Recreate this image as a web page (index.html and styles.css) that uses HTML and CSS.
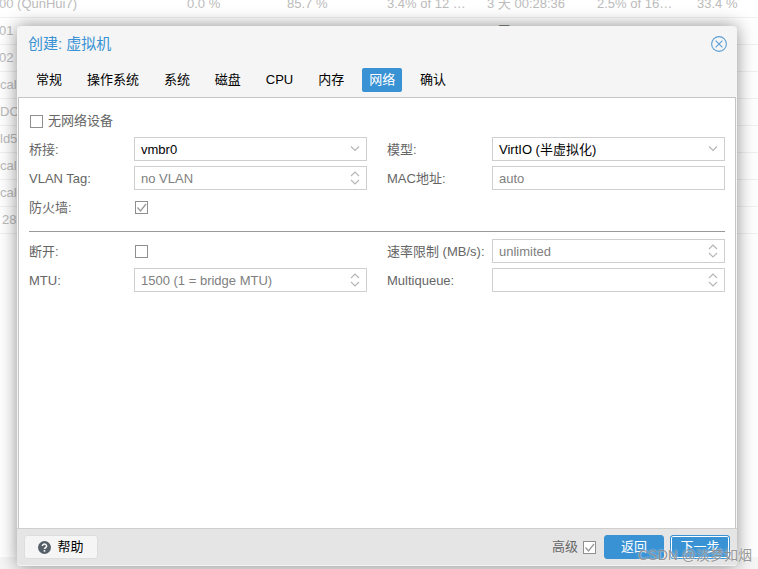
FILE: index.html
```html
<!DOCTYPE html>
<html lang="zh">
<head>
<meta charset="utf-8">
<title>创建: 虚拟机</title>
<link rel="stylesheet" href="styles.css">
</head>
<body>
<svg class="defs" width="0" height="0" aria-hidden="true">
  <symbol id="chev" viewBox="0 0 12 8"><path d="M2 1.5 6 5.5l4-4" fill="none" stroke="#b5b5b5" stroke-width="1.1"/></symbol>
  <symbol id="spin" viewBox="0 0 12 16"><path d="M2 6 6 2l4 4M2 10l4 4 4-4" fill="none" stroke="#b5b5b5" stroke-width="1.1"/></symbol>
  <symbol id="tick" viewBox="0 0 13 13"><path d="M2.5 6.5 5.5 10 11 3" fill="none" stroke="#999" stroke-width="1.3"/></symbol>
</svg>

<div class="grid">
  <div class="row"><span class="clip">00 (QunHui7)</span><span>0.0 %</span><span>85.7 %</span><span>3.4% of 12 …</span><span>3 天 00:28:36</span><span>2.5% of 16…</span><span>33.4 %</span></div>
  <div class="row"><span class="clip">01 (</span><span></span><span></span><span></span><span class="peek">3 天</span><span></span><span></span></div>
  <div class="row"><span class="clip">02 (</span></div>
  <div class="row"><span>calr</span></div>
  <div class="row"><span>DC</span></div>
  <div class="row"><span>ld5</span></div>
  <div class="row"><span>cal</span></div>
  <div class="row"><span>cal-</span></div>
  <div class="row"><span class="inset">28</span></div>
</div>
<div class="strip"></div>

<section class="window">
  <header class="win-head">
    <h1>创建: 虚拟机</h1>
    <svg class="close" width="16" height="16" viewBox="0 0 16 16"><circle cx="8" cy="8" r="7.4" fill="none" stroke="#5c9fd6" stroke-width="1.1"/><path d="M4.6 4.6l6.8 6.8M11.4 4.6l-6.8 6.8" stroke="#5c9fd6" stroke-width="1.1"/></svg>
  </header>
  <nav class="tabs">
    <span class="tab">常规</span>
    <span class="tab">操作系统</span>
    <span class="tab">系统</span>
    <span class="tab">磁盘</span>
    <span class="tab">CPU</span>
    <span class="tab">内存</span>
    <span class="tab active">网络</span>
    <span class="tab">确认</span>
  </nav>
  <main class="panel">
    <label class="nonet"><span class="check"></span><span>无网络设备</span></label>
    <div class="form">
      <div class="field"><span class="lbl">桥接:</span><div class="input"><span class="val">vmbr0</span><svg class="chev"><use href="#chev"/></svg></div></div>
      <div class="field"><span class="lbl">模型:</span><div class="input"><span class="val">VirtIO (半虚拟化)</span><svg class="chev"><use href="#chev"/></svg></div></div>
      <div class="field"><span class="lbl">VLAN Tag:</span><div class="input"><span class="val ph">no VLAN</span><svg class="spin"><use href="#spin"/></svg></div></div>
      <div class="field"><span class="lbl">MAC地址:</span><div class="input"><span class="val ph">auto</span></div></div>
      <div class="field"><span class="lbl">防火墙:</span><span class="check"><svg width="13" height="13"><use href="#tick"/></svg></span></div>
      <div class="field"></div>
    </div>
    <hr class="sep">
    <div class="form">
      <div class="field"><span class="lbl">断开:</span><span class="check"></span></div>
      <div class="field"><span class="lbl">速率限制 (MB/s):</span><div class="input"><span class="val ph">unlimited</span><svg class="spin"><use href="#spin"/></svg></div></div>
      <div class="field"><span class="lbl">MTU:</span><div class="input"><span class="val ph">1500 (1 = bridge MTU)</span><svg class="spin"><use href="#spin"/></svg></div></div>
      <div class="field"><span class="lbl">Multiqueue:</span><div class="input"><span class="val ph"></span><svg class="spin"><use href="#spin"/></svg></div></div>
    </div>
  </main>
  <footer class="win-foot">
    <button class="btn help"><svg width="13" height="13" viewBox="0 0 13 13"><circle cx="6.5" cy="6.5" r="6.5" fill="#555f69"/><path d="M4.4 5a2.1 1.9 0 1 1 3.2 1.6c-.7.5-1.1.8-1.1 1.5" fill="none" stroke="#fff" stroke-width="1.5"/><rect x="5.7" y="9.1" width="1.6" height="1.6" fill="#fff"/></svg><span>帮助</span></button>
    <span class="adv">高级</span>
    <span class="check"><svg width="13" height="13"><use href="#tick"/></svg></span>
    <button class="btn primary back">返回</button>
    <button class="btn primary next">下一步</button>
  </footer>
</section>

<div class="mark">CSDN @淡梦如烟</div>
</body>
</html>
```

FILE: styles.css
```css
* { box-sizing: border-box; }
html, body { margin: 0; height: 100%; }
body {
  position: relative;
  display: flex;
  flex-direction: column;
  width: 758px;
  height: 569px;
  overflow: hidden;
  background: #fff;
  font: 13px/16px "Liberation Sans", "Noto Sans CJK SC", sans-serif;
  color: #666;
}
.defs { position: absolute; }

.grid { margin-top: -9px; color: #bbb; }
.row {
  display: grid;
  grid-template-columns: 187px 100px 100px 100px 110px 100px 61px;
  align-items: center;
  height: 27px;
  border-bottom: 1px solid #f0f0f0;
  white-space: nowrap;
  overflow: hidden;
}
.clip { margin-left: -1px; }
.inset { margin-left: 2px; }
.peek { color: #888; }
.strip { height: 12px; margin-top: auto; background: #f5f5f5; }

.window {
  position: absolute;
  left: 17px;
  top: 26px;
  width: 720px;
  height: 540px;
  display: flex;
  flex-direction: column;
  background: #f5f5f5;
  border-radius: 4px;
  box-shadow: 0 0 18px rgba(0, 0, 0, .45);
}
.win-head {
  display: flex;
  align-items: center;
  justify-content: space-between;
  height: 36px;
  padding: 0 10px 0 11px;
}
.win-head h1 { margin: 0; font-size: 15px; font-weight: 400; color: #3892d4; }

.tabs {
  display: flex;
  gap: 10.95px;
  height: 35px;
  padding: 6px 0 0 12px;
}
.tab {
  height: 24px;
  padding: 0 7px;
  line-height: 24px;
  color: #000;
  border-radius: 2px;
}
.active { background: #3892d4; color: #fff; }

.panel {
  flex: 1;
  margin: 0 1px;
  padding: 15px 10px 0;
  background: #fff;
  border: 1px solid #c5c5c5;
  border-width: 1px 1px 0 1px;
}
.nonet { display: flex; align-items: center; gap: 5px; height: 16px; margin-left: 1px; }
.check {
  display: block;
  flex: none;
  width: 13px;
  height: 13px;
  border: 1px solid #8f8f8f;
  background: #fff;
  position: relative;
}
.check svg { position: absolute; left: -1px; top: -1px; }

.form {
  display: grid;
  grid-template-columns: 358px 338px;
  grid-auto-rows: 24px;
  row-gap: 5px;
}
.nonet + .form { margin-top: 8px; }
.field { display: flex; align-items: center; }
.lbl { flex: none; width: 105px; padding-top: 1px; white-space: nowrap; }
.val { padding-top: 1px; }
.field .check { margin-left: 1px; }
.input {
  display: flex;
  align-items: center;
  justify-content: space-between;
  width: 233px;
  height: 24px;
  padding: 0 5px 0 6px;
  border: 1px solid #cfcfcf;
  background: #fff;
  color: #000;
}
.ph { color: #808080; }
.chev { width: 12px; height: 8px; }
.spin { width: 12px; height: 16px; }

.sep {
  width: 696px;
  height: 1px;
  margin: 12px 0 7px;
  border: 0;
  background: #999;
}

.win-foot {
  display: flex;
  align-items: center;
  height: 38px;
  padding: 0 7px;
  background: #e5e5e5;
  border-top: 1px solid #cfcfcf;
  border-bottom: 1px solid #f3f3f3;
  border-radius: 0 0 4px 4px;
}
.btn {
  height: 24px;
  padding: 0;
  font: inherit;
  border-radius: 3px;
  border: 1px solid #ddd;
}
.help {
  display: flex;
  align-items: center;
  justify-content: center;
  gap: 6px;
  width: 74px;
  margin-right: auto;
  background: #f5f5f5;
  color: #000;
}
.adv { color: #666; margin-right: 5px; }
.primary { background: #3892d4; border-color: #3892d4; color: #fff; }
.back { width: 60px; margin-left: 8px; }
.next {
  width: 60px;
  margin-left: 6px;
  box-shadow: inset 0 0 0 1px #fff;
}

.mark {
  position: absolute;
  right: 6px;
  top: 547px;
  color: rgba(125, 125, 125, .8);
  font-size: 14px;
  white-space: nowrap;
  text-shadow: 0 0 2px rgba(255, 255, 255, .9);
}
```
